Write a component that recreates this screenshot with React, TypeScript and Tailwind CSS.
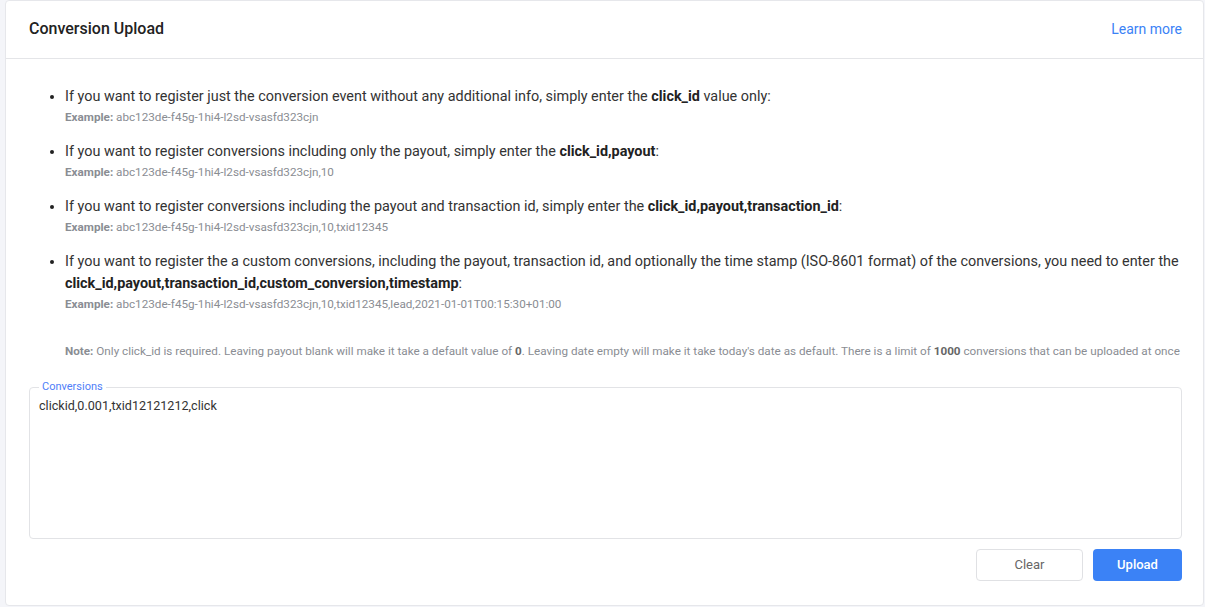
import React, { useState } from 'react';

interface Instruction {
  text: string;
  format: string;
  suffix: string;
  example: string;
}

const instructions: Instruction[] = [
  {
    text: 'If you want to register just the conversion event without any additional info, simply enter the ',
    format: 'click_id',
    suffix: ' value only:',
    example: 'abc123de-f45g-1hi4-l2sd-vsasfd323cjn',
  },
  {
    text: 'If you want to register conversions including only the payout, simply enter the ',
    format: 'click_id,payout',
    suffix: ':',
    example: 'abc123de-f45g-1hi4-l2sd-vsasfd323cjn,10',
  },
  {
    text: 'If you want to register conversions including the payout and transaction id, simply enter the ',
    format: 'click_id,payout,transaction_id',
    suffix: ':',
    example: 'abc123de-f45g-1hi4-l2sd-vsasfd323cjn,10,txid12345',
  },
  {
    text: 'If you want to register the a custom conversions, including the payout, transaction id, and optionally the time stamp (ISO-8601 format) of the conversions, you need to enter the ',
    format: 'click_id,payout,transaction_id,custom_conversion,timestamp',
    suffix: ':',
    example: 'abc123de-f45g-1hi4-l2sd-vsasfd323cjn,10,txid12345,lead,2021-01-01T00:15:30+01:00',
  },
];

const App: React.FC = () => {
  const [value, setValue] = useState('clickid,0.001,txid12121212,click');

  return (
    <div className="min-h-[607px] bg-[#f4f5f9] pl-[5px] pr-px font-['Roboto',sans-serif]">
      <div className="flex min-h-[606px] flex-col rounded-[4px] border border-[#e6e7eb] bg-white">
        {/* header */}
        <div className="flex h-[58px] items-center justify-between border-b border-[#e4e5e8] pb-px pl-[23px] pr-[21px]">
          <h1 className="text-[16px] font-medium text-[#222]">Conversion Upload</h1>
          <a className="text-[14px] text-[#3b82f6]" href="#">Learn more</a>
        </div>

        {/* body */}
        <div className="pl-[23px] pr-[21px] pt-[27px]">
          <ul className="list-disc pl-[36px] text-[14.4px] text-[#333] marker:text-[#222]">
            {instructions.map((item) => (
              <li key={item.format} className="mb-[14px] leading-[22px]">
                {item.text}
                <b className="font-bold text-[#222]">{item.format}</b>
                {item.suffix}
                <div className="text-[11.7px] leading-[19px] text-[#8a8d93]">
                  <b className="font-bold">Example:</b> {item.example}
                </div>
              </li>
            ))}
          </ul>

          <p className="mt-[28px] whitespace-nowrap pl-[36px] text-[11.7px] leading-[18px] text-[#8a8d93]">
            <b className="font-bold">Note:</b> Only click_id is required. Leaving payout blank will make it take a default
            value of <b className="font-bold text-[#666]">0</b>. Leaving date empty will make it take today's date as
            default. There is a limit of <b className="font-bold text-[#666]">1000</b> conversions that can be uploaded
            at once
          </p>

          <fieldset className="mt-[20px] h-[159px] rounded-[4px] border border-[#e2e3e6] px-0 pb-0">
            <legend className="ml-[9px] px-[3px] text-[11px] leading-[14px] text-[#4f7ef8]">Conversions</legend>
            <textarea
              className="block h-[144px] w-full resize-none bg-transparent px-[9px] pt-[2px] text-[12.6px] leading-[20px] text-[#333] outline-none"
              value={value}
              onChange={(e) => setValue(e.target.value)}
            />
          </fieldset>

          <div className="mt-[10px] flex justify-end gap-[10px]">
            <button
              className="h-[32px] w-[107px] rounded-[4px] border border-[#e0e1e4] bg-white text-[13px] text-[#666]"
              onClick={() => setValue('')}
            >
              Clear
            </button>
            <button className="h-[32px] w-[89px] rounded-[4px] bg-[#3b82f6] text-[13px] font-medium text-white">
              Upload
            </button>
          </div>
        </div>
      </div>
    </div>
  );
};

export default App;
